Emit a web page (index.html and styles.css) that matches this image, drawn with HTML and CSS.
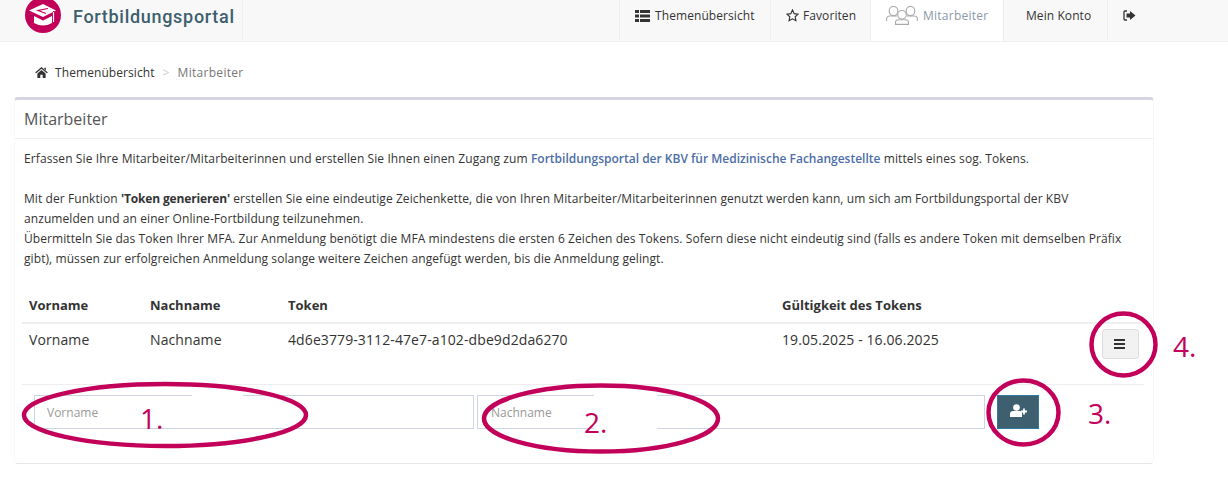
FILE: index.html
```html
<!DOCTYPE html>
<html lang="de">
<head>
    <meta charset="UTF-8">
    <title>Fortbildungsportal</title>
    <link rel="stylesheet" href="styles.css">
</head>
<body>

    <header class="topbar">
        <div class="brand">
            <svg class="brand-logo" viewBox="0 0 36 36" width="36" height="36">
                <circle cx="18" cy="18" r="18" fill="#c2005a"/>
                <path d="M18 7 L31 13.500 L18 20 L4 13.500 Z" fill="#fff"/>
                <path d="M9 19 L18 23.500 L27 19 L27 26 Q18 31 9 26 Z" fill="#fff"/>
                <path d="M23 11.500 L13 13.500 L21 16.500 M28.500 14 V23" stroke="#c2005a" stroke-width="1.200" fill="none"/>
                <path d="M28.500 15 V25" stroke="#fff" stroke-width="1.200" fill="none"/>
            </svg>
            <span class="brand-name">Fortbildungsportal</span>
        </div>
        <nav class="nav">
            <a class="nav-item nav-topics">
                <svg class="icon" viewBox="0 0 15 12" width="15" height="12"><path d="M0 0h4v3H0zM5 0h10v3H5zM0 4.500h4v3H0zM5 4.500h10v3H5zM0 9h4v3H0zM5 9h10v3H5z" fill="#333"/></svg>
                Themenübersicht
            </a>
            <a class="nav-item nav-fav">
                <svg class="icon" viewBox="0 0 14 14" width="13" height="13"><path d="M7 1 L8.800 5 L13 5.500 L9.900 8.400 L10.700 12.700 L7 10.600 L3.300 12.700 L4.100 8.400 L1 5.500 L5.200 5 Z" fill="none" stroke="#333" stroke-width="1.200"/></svg>
                Favoriten
            </a>
            <a class="nav-item nav-active">
                <svg class="icon" viewBox="0 0 32 19" width="32" height="19" fill="none" stroke="#aaa" stroke-width="1.100">
                    <ellipse cx="7.500" cy="5" rx="4.300" ry="4.600"/><path d="M.6 15 V13 Q.6 10 4 10 H11"/>
                    <ellipse cx="24.500" cy="5" rx="4.300" ry="4.600"/><path d="M31.400 15 V13 Q31.400 10 28 10 H21"/>
                    <ellipse cx="16" cy="8.800" rx="4.300" ry="4.300" fill="#fff"/><path d="M9.500 18.400 V16.500 Q9.500 13.800 13 13.800 H19 Q22.500 13.800 22.500 16.500 V18.400 Z" fill="#fff"/>
                </svg>
                Mitarbeiter
            </a>
            <a class="nav-item nav-account">Mein Konto</a>
            <a class="nav-item nav-logout">
                <svg class="icon" viewBox="0 0 13 11" width="13" height="11"><path d="M4 1H2Q1 1 1 2V9Q1 10 2 10H4" fill="none" stroke="#333" stroke-width="1.300"/><path d="M3.500 3.500H7V1L12.500 5.500 7 10V7.500H3.500Z" fill="#333"/></svg>
            </a>
        </nav>
    </header>

    <div class="breadcrumb">
        <svg class="icon" viewBox="0 0 14 12" width="13" height="11"><path d="M7 0 L14 6 L12.800 6.800 L7 2 L1.200 6.800 L0 6 Z M2.500 7 L7 3.200 L11.500 7 V12 H8.300 V8.500 H5.700 V12 H2.500 Z M10 .8 H11.800 V3.500 L10 2 Z" fill="#333"/></svg>
        <span class="crumb">Themenübersicht</span>
        <span class="crumb-sep">&gt;</span>
        <span class="crumb-current">Mitarbeiter</span>
    </div>

    <section class="panel">
        <h1 class="panel-title">Mitarbeiter</h1>
        <div class="panel-body">
            <p class="intro intro-first">Erfassen Sie Ihre Mitarbeiter/Mitarbeiterinnen und erstellen Sie Ihnen einen Zugang zum <a class="portal-link">Fortbildungsportal der KBV für Medizinische Fachangestellte</a> mittels eines sog. Tokens.</p>
            <p class="intro intro-long">Mit der Funktion <b class="intro-strong">'Token generieren'</b> erstellen Sie eine eindeutige Zeichenkette, die von Ihren Mitarbeiter/Mitarbeiterinnen genutzt werden kann, um sich am Fortbildungsportal der KBV anzumelden und an einer Online-Fortbildung teilzunehmen.<br>Übermitteln Sie das Token Ihrer MFA. Zur Anmeldung benötigt die MFA mindestens die ersten 6 Zeichen des Tokens. Sofern diese nicht eindeutig sind (falls es andere Token mit demselben Präfix gibt), müssen zur erfolgreichen Anmeldung solange weitere Zeichen angefügt werden, bis die Anmeldung gelingt.</p>

            <div class="row row-head">
                <span class="col-first">Vorname</span>
                <span class="col-last">Nachname</span>
                <span class="col-token">Token</span>
                <span class="col-valid">Gültigkeit des Tokens</span>
            </div>
            <div class="row row-data">
                <span class="col-first">Vorname</span>
                <span class="col-last">Nachname</span>
                <span class="col-token">4d6e3779-3112-47e7-a102-dbe9d2da6270</span>
                <span class="col-valid">19.05.2025 - 16.06.2025</span>
                <button class="menu-button">
                    <svg viewBox="0 0 11 10" width="11" height="10"><path d="M0 0h11v2H0zM0 4h11v2H0zM0 8h11v2H0z" fill="#333"/></svg>
                </button>
            </div>
            <form class="add-row">
                <input class="add-input add-first" type="text" placeholder="Vorname">
                <input class="add-input add-last" type="text" placeholder="Nachname">
                <button class="add-button" type="button">
                    <svg viewBox="0 0 17 13" width="17" height="13"><circle cx="6.500" cy="3.500" r="3.300" fill="#fff"/><path d="M0 13V10Q0 7 3 7H10Q12 7 12 9V13Z" fill="#fff"/><path d="M11 7.500h6M14 4.500v6" stroke="#fff" stroke-width="1.800"/></svg>
                </button>
            </form>
        </div>
    </section>

    <!-- Anmerkungen ueber dem Screenshot -->
    <div class="cover cover-one"></div>
    <div class="cover cover-two"></div>
    <svg class="marks" viewBox="0 0 1228 482" width="1228" height="482" fill="none" stroke="#c2005a" stroke-width="4.500">
        <ellipse cx="165" cy="415" rx="141" ry="31"/>
        <ellipse cx="601" cy="418.500" rx="117" ry="33"/>
        <ellipse cx="1023.500" cy="412.500" rx="35" ry="32"/>
        <ellipse cx="1123.500" cy="344.500" rx="32" ry="31"/>
    </svg>
    <span class="mark-label label-one">1.</span>
    <span class="mark-label label-two">2.</span>
    <span class="mark-label label-three">3.</span>
    <span class="mark-label label-four">4.</span>

</body>
</html>
```

FILE: styles.css
```css
body {
    margin: 0;
    background: #fff;
    color: #333;
    font-family: "Open Sans", "Noto Sans", Arial, sans-serif;
    font-size: 12px;
    letter-spacing: 0.08px;
    overflow: hidden;
    height: 482px;
    position: relative;
}
.topbar {
    display: flex;
    height: 41px;
    background: #f8f8f8;
    border-bottom: 1px solid #eee;
}
.brand {
    display: flex;
    align-items: center;
    width: 243px;
    box-sizing: border-box;
    padding-left: 25px;
    border-right: 1px solid #eee;
    overflow: hidden;
}
.brand-logo {
    margin-top: -11px;
    flex: none;
}
.brand-name {
    margin-left: 12px;
    margin-top: -9px;
    color: #3d5f6e;
    font-family: Roboto, sans-serif;
    font-size: 18px;
    font-weight: 500;
    letter-spacing: 0.7px;
}
.nav {
    display: flex;
    margin-left: 376px;
}
.nav-item {
    display: flex;
    align-items: center;
    gap: 5px;
    height: 41px;
    padding-bottom: 10px;
    box-sizing: border-box;
    border-left: 1px solid #eee;
    white-space: nowrap;
}
.nav-topics {
    width: 151px;
    padding-left: 15px;
}
.nav-fav {
    width: 100px;
    padding-left: 15px;
    gap: 4px;
}
.nav-active {
    width: 133px;
    padding-left: 15px;
    background: #fff;
    color: #8a98a8;
    letter-spacing: 0.25px;
}
.nav-account {
    width: 104px;
    padding-left: 22px;
}
.nav-logout {
    padding-left: 15px;
}
.icon {
    flex: none;
}
.breadcrumb {
    display: flex;
    align-items: center;
    height: 55px;
    box-sizing: border-box;
    padding: 5px 0 0 35px;
    gap: 7px;
}
.crumb-sep {
    color: #ccc;
    margin: 0 1px;
}
.crumb-current {
    color: #777;
    letter-spacing: 0.3px;
}
.panel {
    width: 1140px;
    height: 367px;
    margin-left: 14px;
    box-sizing: border-box;
    border-top: 3px solid #d5d5e0;
    border-right: 1px solid #f6f6f6;
    border-bottom: 1px solid #e6e6e6;
    border-left: 1px solid #f8f8f8;
    border-radius: 4px;
}
.panel-title {
    margin: 0;
    padding: 0 0 0 9px;
    height: 39px;
    line-height: 38px;
    box-sizing: border-box;
    font-size: 16px;
    font-weight: 400;
    letter-spacing: 0;
    color: #555;
    border-bottom: 1px solid #eee;
}
.panel-body {
    padding: 0 9px;
}
.intro {
    margin: 10px 0 20px;
    line-height: 20px;
    width: 1105px;
}
.intro-first {
    letter-spacing: 0.1px;
}
.intro-long {
    margin-bottom: 20px;
}
.intro-strong {
    letter-spacing: -0.15px;
}
.portal-link {
    color: #4c6ea8;
    font-weight: 600;
    letter-spacing: 0;
}
.row {
    position: relative;
    display: flex;
    align-items: center;
    margin-left: -2px;
    border-bottom: 1px solid #eee;
    padding-left: 7px;
}
.row-head {
    height: 33px;
    padding-bottom: 2px;
    box-sizing: content-box;
    height: 31px;
    font-size: 13px;
    font-weight: 700;
    letter-spacing: 0;
    border-bottom-width: 2px;
}
.row-data {
    height: 61px;
    padding-bottom: 30px;
    box-sizing: border-box;
    font-size: 14px;
    letter-spacing: 0.1px;
}
.col-first {
    width: 121px;
}
.col-last {
    width: 138px;
}
.col-token {
    width: 494px;
}
.menu-button {
    position: absolute;
    left: 1080px;
    top: 5px;
    width: 37px;
    height: 30px;
    padding: 0 2px 0 0;
    background: #f2f2f2;
    border: 1px solid #ddd;
    border-radius: 3px;
}
.add-row {
    display: flex;
    margin: 10px 0 0 10px;
}
.add-input {
    box-sizing: border-box;
    height: 34px;
    padding: 0 12px;
    border: 1px solid #d0d3e0;
    background: #fff;
    font-family: inherit;
    font-size: 12px;
    outline: none;
}
.add-input::placeholder {
    color: #999;
}
.add-first {
    width: 440px;
}
.add-last {
    width: 508px;
    margin-left: 3px;
    padding-left: 13px;
}
.add-button {
    width: 42px;
    height: 34px;
    margin-left: 12px;
    padding: 0;
    background: #3d5f70;
    border: 1px solid #2f7ba0;
}
.marks {
    position: absolute;
    left: 0;
    top: 0;
    pointer-events: none;
}
.cover {
    position: absolute;
    background: #fff;
}
.cover-one {
    left: 192px;
    top: 393px;
    width: 51px;
    height: 5px;
}
.cover-two {
    left: 594px;
    top: 390px;
    width: 63px;
    height: 40px;
}
.mark-label {
    position: absolute;
    color: #c2005a;
    font-family: "Open Sans", sans-serif;
    font-size: 28px;
    line-height: 30px;
    letter-spacing: 0;
}
.label-one {
    left: 140px;
    top: 403px;
}
.label-two {
    left: 584px;
    top: 407px;
}
.label-three {
    left: 1088px;
    top: 398px;
}
.label-four {
    left: 1173px;
    top: 331px;
}
```
